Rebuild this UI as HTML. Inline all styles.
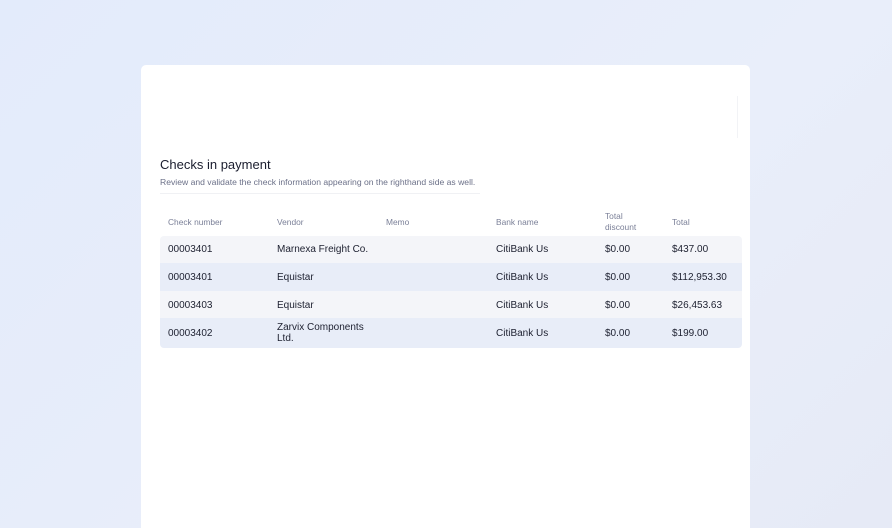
<!DOCTYPE html>
<html><head><style>
html,body{margin:0;padding:0;width:892px;height:528px;overflow:hidden}
body{background:linear-gradient(135deg,#e3ebfb 0%,#e9eefa 60%,#e6eaf6 100%);font-family:"Liberation Sans",sans-serif;position:relative}
.card{position:absolute;left:141px;top:65px;width:609px;height:463px;background:#fff;border-radius:5px 5px 0 0}
.vl{position:absolute;left:737px;top:96px;width:1px;height:42px;background:#f2f3f6}
h1{position:absolute;left:160px;top:157px;margin:0;font-size:13px;font-weight:normal;color:#1a1d2e}
.sub{position:absolute;left:160px;top:177px;font-size:8.6px;color:#6b7088}
.hr{position:absolute;left:160px;top:193px;width:320px;height:1px;background:#f0f1f4}
.c{position:absolute;font-size:10px;color:#1d2030;line-height:11px}
.h{position:absolute;font-size:8.4px;color:#7b8098;line-height:11px}
.row{position:absolute;left:160px;width:582px}
</style></head><body>
<div class="card"></div>
<div class="vl"></div>
<h1>Checks in payment</h1>
<div class="sub">Review and validate the check information appearing on the righthand side as well.</div>
<div class="hr"></div>
<div class="h" style="left:168px;top:217px">Check number</div>
<div class="h" style="left:277px;top:217px">Vendor</div>
<div class="h" style="left:386px;top:217px">Memo</div>
<div class="h" style="left:496px;top:217px">Bank name</div>
<div class="h" style="left:605px;top:211px">Total<br>discount</div>
<div class="h" style="left:672px;top:217px">Total</div>
<div class="row" style="top:236px;height:27px;background:#f4f5f9;border-radius:4px 4px 0 0"></div>
<div class="row" style="top:263px;height:28px;background:#e8edf8"></div>
<div class="row" style="top:291px;height:27px;background:#f4f5f9"></div>
<div class="row" style="top:318px;height:30px;background:#e8edf8;border-radius:0 0 4px 4px"></div>
<div class="c" style="left:168px;top:244px">00003401</div><div class="c" style="left:277px;top:244px">Marnexa Freight Co.</div><div class="c" style="left:496px;top:244px">CitiBank Us</div><div class="c" style="left:605px;top:244px">$0.00</div><div class="c" style="left:672px;top:244px">$437.00</div>
<div class="c" style="left:168px;top:272px">00003401</div><div class="c" style="left:277px;top:272px">Equistar</div><div class="c" style="left:496px;top:272px">CitiBank Us</div><div class="c" style="left:605px;top:272px">$0.00</div><div class="c" style="left:672px;top:272px">$112,953.30</div>
<div class="c" style="left:168px;top:300px">00003403</div><div class="c" style="left:277px;top:300px">Equistar</div><div class="c" style="left:496px;top:300px">CitiBank Us</div><div class="c" style="left:605px;top:300px">$0.00</div><div class="c" style="left:672px;top:300px">$26,453.63</div>
<div class="c" style="left:168px;top:328px">00003402</div><div class="c" style="left:277px;top:322px">Zarvix Components<br>Ltd.</div><div class="c" style="left:496px;top:328px">CitiBank Us</div><div class="c" style="left:605px;top:328px">$0.00</div><div class="c" style="left:672px;top:328px">$199.00</div>
</body></html>
